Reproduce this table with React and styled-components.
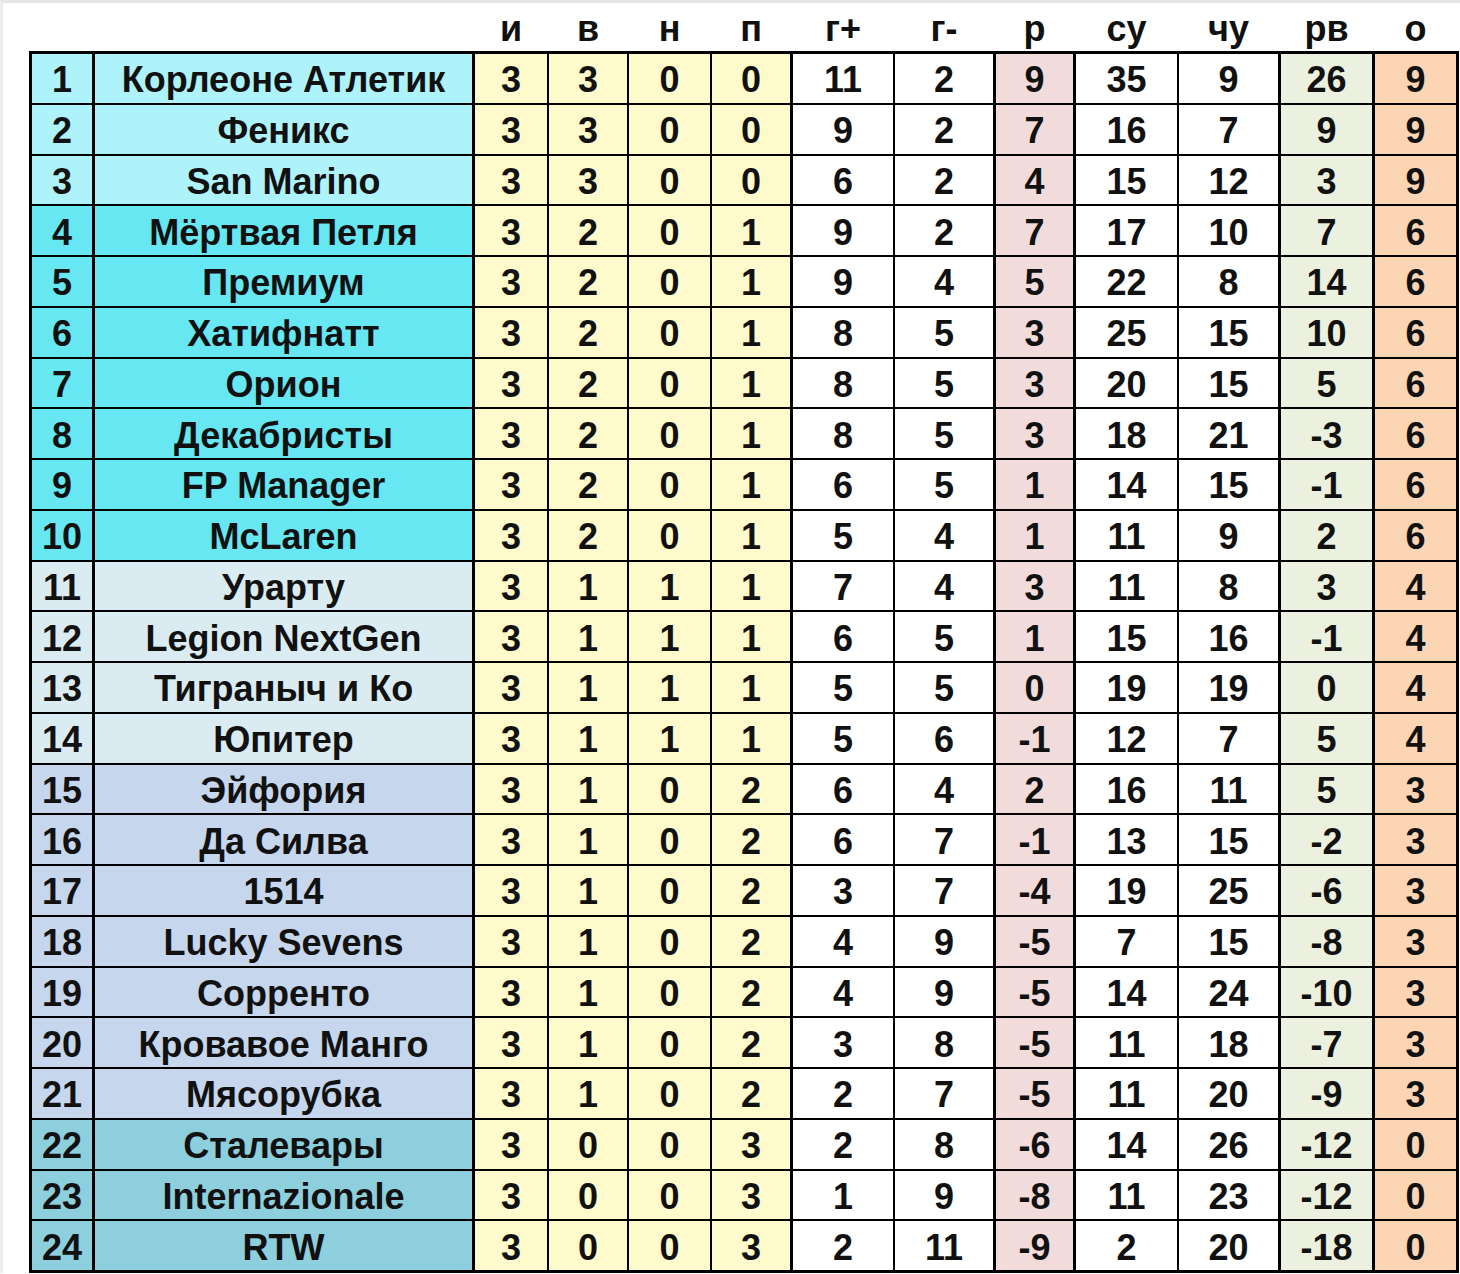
import React from 'react'
import styled, { createGlobalStyle } from 'styled-components'

const GlobalStyle = createGlobalStyle`
  html, body {
    margin: 0;
    background: #fff;
  }
  body {
    border-top: 3px solid #e4e4e4;
    border-left: 3px solid #ececec;
    font-family: "Liberation Sans", Arial, sans-serif;
    font-weight: bold;
    color: #111;
  }
`

// widths include the black line on the left of each column
const columns = [
  { key: 'pos', width: 60, line: 0 },
  { key: 'name', width: 380, line: 3 },
  { key: 'и', width: 75, line: 3, bg: '#fefacb' },
  { key: 'в', width: 80, line: 2, bg: '#fefacb' },
  { key: 'н', width: 83, line: 2, bg: '#fefacb' },
  { key: 'п', width: 80, line: 2, bg: '#fefacb' },
  { key: 'г+', width: 103, line: 3, bg: '#ffffff' },
  { key: 'г-', width: 100, line: 2, bg: '#ffffff' },
  { key: 'р', width: 80, line: 3, bg: '#f2dcdb' },
  { key: 'су', width: 104, line: 3, bg: '#ffffff' },
  { key: 'чу', width: 101, line: 2, bg: '#ffffff' },
  { key: 'рв', width: 94, line: 3, bg: '#ebf1de' },
  { key: 'о', width: 84, line: 3, bg: '#fcd5b5' },
]

const template = columns.map((c) => `${c.width}px`).join(' ')

const rows = [
  ['Корлеоне Атлетик', 3, 3, 0, 0, 11, 2, 9, 35, 9, 26, 9],
  ['Феникс', 3, 3, 0, 0, 9, 2, 7, 16, 7, 9, 9],
  ['San Marino', 3, 3, 0, 0, 6, 2, 4, 15, 12, 3, 9],
  ['Мёртвая Петля', 3, 2, 0, 1, 9, 2, 7, 17, 10, 7, 6],
  ['Премиум', 3, 2, 0, 1, 9, 4, 5, 22, 8, 14, 6],
  ['Хатифнатт', 3, 2, 0, 1, 8, 5, 3, 25, 15, 10, 6],
  ['Орион', 3, 2, 0, 1, 8, 5, 3, 20, 15, 5, 6],
  ['Декабристы', 3, 2, 0, 1, 8, 5, 3, 18, 21, -3, 6],
  ['FP Manager', 3, 2, 0, 1, 6, 5, 1, 14, 15, -1, 6],
  ['McLaren', 3, 2, 0, 1, 5, 4, 1, 11, 9, 2, 6],
  ['Урарту', 3, 1, 1, 1, 7, 4, 3, 11, 8, 3, 4],
  ['Legion NextGen', 3, 1, 1, 1, 6, 5, 1, 15, 16, -1, 4],
  ['Тиграныч и Ко', 3, 1, 1, 1, 5, 5, 0, 19, 19, 0, 4],
  ['Юпитер', 3, 1, 1, 1, 5, 6, -1, 12, 7, 5, 4],
  ['Эйфория', 3, 1, 0, 2, 6, 4, 2, 16, 11, 5, 3],
  ['Да Силва', 3, 1, 0, 2, 6, 7, -1, 13, 15, -2, 3],
  ['1514', 3, 1, 0, 2, 3, 7, -4, 19, 25, -6, 3],
  ['Lucky Sevens', 3, 1, 0, 2, 4, 9, -5, 7, 15, -8, 3],
  ['Сорренто', 3, 1, 0, 2, 4, 9, -5, 14, 24, -10, 3],
  ['Кровавое Манго', 3, 1, 0, 2, 3, 8, -5, 11, 18, -7, 3],
  ['Мясорубка', 3, 1, 0, 2, 2, 7, -5, 11, 20, -9, 3],
  ['Сталевары', 3, 0, 0, 3, 2, 8, -6, 14, 26, -12, 0],
  ['Internazionale', 3, 0, 0, 3, 1, 9, -8, 11, 23, -12, 0],
  ['RTW', 3, 0, 0, 3, 2, 11, -9, 2, 20, -18, 0],
]

const teamColor = (place) => {
  if (place <= 3) return '#aef3f9'
  if (place <= 10) return '#66e7f1'
  if (place <= 14) return '#daecf1'
  if (place <= 21) return '#c6d6ec'
  return '#8dcfdd'
}

const Page = styled.div`
  padding-left: 26px;
  width: 1430px;
`

const HeaderRow = styled.div`
  display: grid;
  grid-template-columns: ${template};
  height: 48px;
  padding: 0 3px;
`

const HeadCell = styled.div`
  border-left: ${(p) => p.$line}px solid transparent;
  display: flex;
  align-items: flex-end;
  justify-content: center;
  padding-bottom: 4px;
  font-size: 36px;
  line-height: 1;
`

const Table = styled.div`
  display: grid;
  grid-template-columns: ${template};
  grid-auto-rows: 48.75px;
  row-gap: 2px;
  padding: 3px;
  background: #000;
`

const Cell = styled.div`
  border-left: ${(p) => p.$line}px solid #000;
  background: ${(p) => p.$bg};
  display: flex;
  align-items: center;
  justify-content: center;
  padding-top: 4px;
  font-size: 36px;
  white-space: nowrap;
  overflow: hidden;
`

const App = () => (
  <Page>
    <GlobalStyle />
    <HeaderRow>
      {columns.map((c, i) => (
        <HeadCell key={c.key} $line={c.line}>
          {i > 1 ? c.key : ''}
        </HeadCell>
      ))}
    </HeaderRow>
    <Table>
      {rows.map((row, r) => {
        const values = [r + 1, ...row]
        return values.map((v, i) => (
          <Cell
            key={`${r}-${i}`}
            $line={columns[i].line}
            $bg={columns[i].bg || teamColor(r + 1)}
          >
            {v}
          </Cell>
        ))
      })}
    </Table>
  </Page>
)

export default App
